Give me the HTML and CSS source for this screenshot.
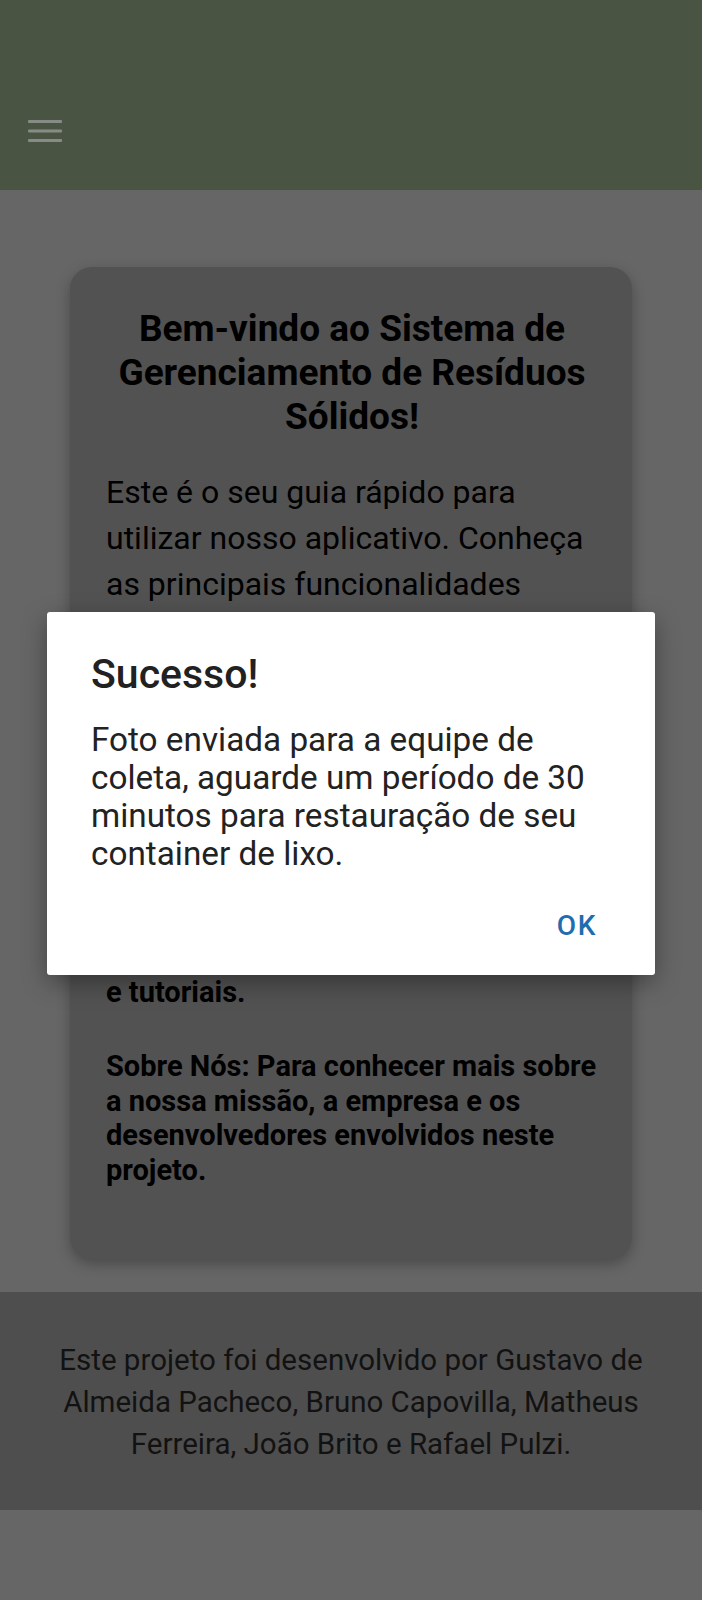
FILE: index.html
```html
<!DOCTYPE html>
<html lang="pt-BR">
<head>
<meta charset="utf-8">
<title>Gerenciamento de Resíduos Sólidos</title>
<link rel="stylesheet" href="styles.css">
</head>
<body>
<div class="page">
  <header class="appbar">
    <button class="menu-btn" aria-label="Menu">
      <svg width="36" height="24" viewBox="0 0 36 24"><rect x="1" y="0" width="34" height="3" rx="1"/><rect x="1" y="9.5" width="34" height="3" rx="1"/><rect x="1" y="19" width="34" height="3" rx="1"/></svg>
    </button>
  </header>

  <main class="content">
    <section class="card">
      <h1 class="card-title">Bem-vindo ao Sistema de Gerenciamento de Resíduos Sólidos!</h1>
      <p class="card-text">Este é o seu guia rápido para utilizar nosso aplicativo. Conheça as principais funcionalidades disponíveis para você:</p>
      <p class="card-text strong">Coleta Inteligente: Fotografe seu container de lixo cheio e envie a imagem diretamente para a equipe de coleta.</p>
      <p class="card-text strong">Ajuda: Encontre respostas para as principais dúvidas sobre o uso do aplicativo, dicas de descarte<br>e tutoriais.</p>
      <p class="card-text strong">Sobre Nós: Para conhecer mais sobre a nossa missão, a empresa e os desenvolvedores envolvidos neste projeto.</p>
    </section>
  </main>

  <footer class="footer">
    <p>Este projeto foi desenvolvido por Gustavo de Almeida Pacheco, Bruno Capovilla, Matheus Ferreira, João Brito e Rafael Pulzi.</p>
  </footer>

  <div class="dialog" role="alertdialog">
    <h2 class="dialog-title">Sucesso!</h2>
    <p class="dialog-msg">Foto enviada para a equipe de coleta, aguarde um período de 30 minutos para restauração de seu container de lixo.</p>
    <div class="dialog-actions">
      <button class="dialog-btn">OK</button>
    </div>
  </div>
</div>
</body>
</html>
```

FILE: styles.css
```css
* { box-sizing: border-box; }

html, body {
  margin: 0;
  padding: 0;
  background: #666666;
  font-family: Roboto, "Noto Sans", "Liberation Sans", sans-serif;
}

.page {
  position: relative;
  width: 702px;
  min-height: 1600px;
  background: #666666;
}

.appbar {
  height: 190px;
  background: #4a5443;
  display: flex;
  align-items: flex-start;
  padding: 120px 0 0 27px;
}

.menu-btn {
  border: 0;
  background: none;
  padding: 0;
  width: 36px;
  height: 24px;
  display: block;
}

.menu-btn svg { display: block; fill: #878b85; }

.content {
  padding: 77px 70px 33px;
}

.card {
  background: #525252;
  border-radius: 22px;
  padding: 40px 34px 32px 36px;
  box-shadow: 0 5px 14px rgba(0, 0, 0, 0.28);
}

.card-title {
  margin: 0 0 30px;
  font-size: 37px;
  line-height: 44px;
  font-weight: 700;
  text-align: center;
  color: #000;
}

.card-text {
  margin: 0 0 40px;
  font-size: 32px;
  line-height: 46px;
  font-weight: 400;
  color: #000;
}

.card-text.strong {
  margin-right: -16px;
  font-size: 29px;
  line-height: 34.5px;
  font-weight: 700;
}

.footer {
  background: #4e4e4e;
  padding: 47px 40px 45px;
}

.footer p {
  margin: 0;
  text-align: center;
  font-size: 29.5px;
  line-height: 42px;
  color: #121212;
}

.dialog {
  position: absolute;
  left: 47px;
  top: 612px;
  width: 608px;
  height: 363px;
  background: #ffffff;
  border-radius: 3px;
  box-shadow: 0 8px 24px rgba(0, 0, 0, 0.35);
  padding: 38px 44px 0 44px;
  display: flex;
  flex-direction: column;
}

.dialog-title {
  margin: 0;
  font-size: 41px;
  line-height: 48px;
  font-weight: 500;
  color: #212121;
}

.dialog-msg {
  margin: 23px 0 0;
  font-size: 33.3px;
  line-height: 38px;
  font-weight: 400;
  color: #222222;
}

.dialog-actions {
  display: flex;
  justify-content: flex-end;
  margin-top: 30px;
  padding-right: 14px;
}

.dialog-btn {
  border: 0;
  background: none;
  padding: 6px 0;
  font-family: Roboto, "Noto Sans", sans-serif;
  font-size: 28px;
  line-height: 34px;
  font-weight: 500;
  letter-spacing: 1.6px;
  color: #1d6db0;
}
```
